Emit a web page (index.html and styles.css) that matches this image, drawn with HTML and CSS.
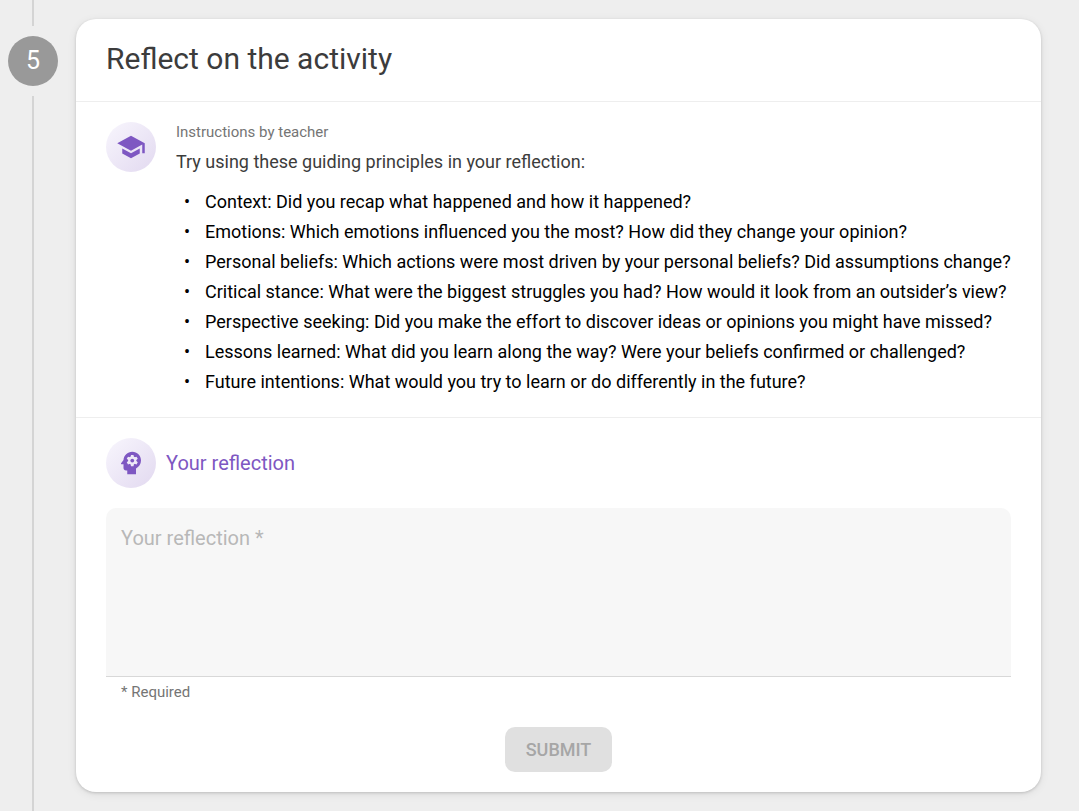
FILE: index.html
```html
<!DOCTYPE html>
<html lang="en">
<head>
<meta charset="utf-8">
<meta name="viewport" content="width=device-width, initial-scale=1">
<title>Reflect on the activity</title>
<link rel="stylesheet" href="styles.css">
</head>
<body>
<main class="step">
  <div class="rail">
    <span class="rail-line rail-line-top"></span>
    <span class="step-number">5</span>
    <span class="rail-line rail-line-rest"></span>
  </div>
  <article class="card">
    <header class="card-header"><h1 class="title">Reflect on the activity</h1></header>
    <section class="instructions">
      <span class="badge">
        <svg class="badge-icon" viewBox="0 0 24 24" aria-hidden="true"><path d="M5 13.18v4L12 21l7-3.82v-4L12 17l-7-3.82zM12 3 1 9l11 6 9-4.91V17h2V9L12 3z"/></svg>
      </span>
      <div class="instructions-body">
        <p class="caption">Instructions by teacher</p>
        <p class="lead">Try using these guiding principles in your reflection:</p>
        <ul class="principles">
          <li>Context: Did you recap what happened and how it happened?</li>
          <li>Emotions: Which emotions influenced you the most? How did they change your opinion?</li>
          <li>Personal beliefs: Which actions were most driven by your personal beliefs? Did assumptions change?</li>
          <li>Critical stance: What were the biggest struggles you had? How would it look from an outsider’s view?</li>
          <li>Perspective seeking: Did you make the effort to discover ideas or opinions you might have missed?</li>
          <li>Lessons learned: What did you learn along the way? Were your beliefs confirmed or challenged?</li>
          <li>Future intentions: What would you try to learn or do differently in the future?</li>
        </ul>
      </div>
    </section>
    <form class="reflection">
      <div class="reflection-heading">
        <span class="badge">
          <svg class="badge-icon" viewBox="0 0 24 24" aria-hidden="true">
            <path d="M13 3C9.23 3 6.19 5.95 6 9.66l-1.92 2.53c-.24.31 0 .81.42.81H6v3c0 1.11.89 2 2 2h1v3h7v-4.69c2.37-1.12 4-3.51 4-6.31 0-3.86-3.12-7-7-7z"/>
            <g class="badge-cutout">
              <circle cx="13" cy="10" r="3.2"/>
              <path d="M12 5.5h2l.4 2h-2.8zM12 14.5h2l.4-2h-2.8zM8.6 8.6l1-1.7 2 .7-1.4 2.4zM8.6 11.4l1 1.7 2-.7-1.4-2.4zM17.4 8.6l-1-1.7-2 .7 1.4 2.4zM17.4 11.4l-1 1.7-2-.7 1.4-2.4z"/>
            </g>
            <circle cx="13" cy="10" r="1.5"/>
          </svg>
        </span>
        <h2 class="subtitle">Your reflection</h2>
      </div>
      <textarea class="field" id="reflection" required aria-label="Your reflection" aria-describedby="hint" placeholder="Your reflection *"></textarea>
      <p class="hint" id="hint">* Required</p>
      <button class="submit" type="submit" disabled>SUBMIT</button>
    </form>
  </article>
</main>
</body>
</html>
```
FILE: styles.css
```css
*, *::before { box-sizing: border-box; }
body {
  margin: 0;
  background: #eeeeee;
  color: #3c3c3c;
  font-family: Roboto, "Liberation Sans", sans-serif;
}
h1, h2, p, ul { margin: 0; padding: 0; font-weight: 400; }
.step { display: flex; gap: 10px; padding-right: 38px; min-height: 100vh; }
.rail {
  flex: 0 0 66px;
  display: flex;
  flex-direction: column;
  align-items: center;
  gap: 10px;
}
.rail-line { width: 2px; background: #d4d4d4; }
.rail-line-top { height: 26px; }
.rail-line-rest { flex: 1; }
.step-number {
  width: 50px;
  height: 50px;
  border-radius: 50%;
  background: #999999;
  color: #ffffff;
  font-size: 25px;
  line-height: 50px;
  text-align: center;
}
.card {
  flex: 1;
  min-width: 0;
  margin: 19px 0;
  background: #ffffff;
  border-radius: 20px;
  box-shadow: 0 1px 3px rgba(0, 0, 0, 0.16), 0 2px 10px rgba(0, 0, 0, 0.08);
}
.card-header { padding: 20px 30px 22px; border-bottom: 1px solid #eeeeee; }
.title { font-size: 30px; line-height: 40px; }
.instructions {
  display: flex;
  gap: 20px;
  padding: 20px 20px 20px 30px;
  border-bottom: 1px solid #eeeeee;
}
.badge {
  flex: none;
  display: grid;
  place-items: center;
  width: 50px;
  height: 50px;
  border-radius: 50%;
  background: linear-gradient(135deg, #f8f6fd, #e2d9f0);
}
.badge-icon { width: 30px; height: 30px; fill: #7e57c2; }
.badge-cutout { fill: #eee9f7; }
.instructions-body { flex: 1; min-width: 0; }
.caption { color: #757575; font-size: 15px; line-height: 20px; }
.lead { margin: 5px 0 10px; font-size: 18px; line-height: 30px; }
.principles { list-style: none; color: #000000; font-size: 18px; line-height: 30px; }
.principles li { display: flex; }
.principles li::before { content: "•"; flex: 0 0 29px; padding-left: 8px; }
.reflection { padding: 20px 30px; display: flex; flex-direction: column; }
.reflection-heading { display: flex; align-items: center; gap: 10px; margin-bottom: 20px; }
.subtitle { color: #7e57c2; font-size: 20px; line-height: 30px; }
.field {
  width: 100%;
  height: 169px;
  padding: 15px;
  border: 0;
  border-bottom: 1px solid #d8d8d8;
  border-radius: 10px 10px 0 0;
  background: #f7f7f7;
  font: 20px/30px Roboto, "Liberation Sans", sans-serif;
  resize: none;
}
.field::placeholder { color: #b8b8b8; opacity: 1; }
.hint { padding: 5px 15px; color: #757575; font-size: 15px; line-height: 20px; }
.submit {
  align-self: center;
  margin-top: 20px;
  padding: 0 21px;
  border: 0;
  border-radius: 10px;
  background: #e0e0e0;
  color: #a6a6a6;
  font: 500 18px/45px Roboto, "Liberation Sans", sans-serif;
}
```
